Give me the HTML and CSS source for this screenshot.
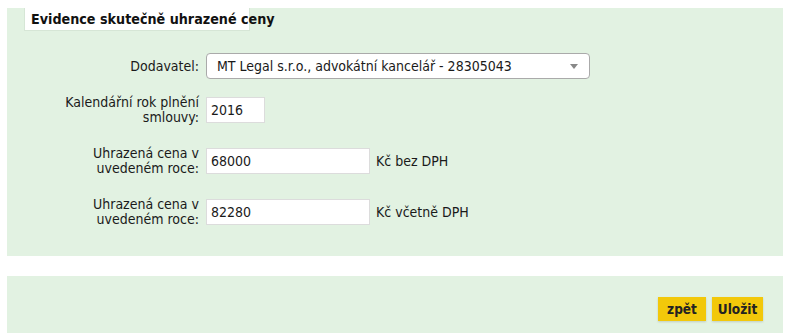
FILE: index.html
```html
<!DOCTYPE html>
<html lang="cs">
<head>
<meta charset="utf-8">
<title>Evidence skutečně uhrazené ceny</title>
<link rel="stylesheet" href="styles.css">
</head>
<body>
<div class="page">
  <section class="panel form-panel">
    <div class="legend">Evidence skutečně uhrazené ceny</div>
    <div class="rows">
      <div class="row row-first">
        <label class="lbl">Dodavatel:</label>
        <div class="select">
          <span class="select-text">MT Legal s.r.o., advokátní kancelář - 28305043</span>
          <svg class="arrow" width="8" height="5" viewBox="0 0 8 5"><path d="M0 0H8L4 5Z" fill="#888"/></svg>
        </div>
      </div>
      <div class="row row-year">
        <label class="lbl">Kalendářní rok plnění smlouvy:</label>
        <input class="field field-year" type="text" value="2016">
      </div>
      <div class="row row-price">
        <label class="lbl">Uhrazená cena v uvedeném roce:</label>
        <input class="field field-price" type="text" value="68000">
        <span class="suffix">Kč bez DPH</span>
      </div>
      <div class="row row-price">
        <label class="lbl">Uhrazená cena v uvedeném roce:</label>
        <input class="field field-price" type="text" value="82280">
        <span class="suffix">Kč včetně DPH</span>
      </div>
    </div>
  </section>
  <section class="panel actions">
    <button class="btn btn-back" type="button">zpět</button>
    <button class="btn btn-save" type="button">Uložit</button>
  </section>
</div>
</body>
</html>
```
FILE: styles.css
```css
html, body {
  margin: 0;
  padding: 0;
  background: #ffffff;
  overflow: hidden;
}
body {
  font-family: "DejaVu Sans Condensed", "DejaVu Sans", sans-serif;
  font-size: 14px;
  color: #1a1a1a;
}
.page {
  padding: 8px 4px 0 7px;
}
.panel {
  background: #e2f2e2;
}
.form-panel {
  height: 248px;
  box-sizing: border-box;
}
.legend {
  display: inline-block;
  box-sizing: border-box;
  margin-left: 17px;
  background: #fff;
  border: 1px solid #d6e6d6;
  border-top: none;
  padding: 4px 6px 3px 6px;
  font-weight: bold;
  font-size: 14.2px;
  line-height: 15px;
  color: #111;
  width: 226px;
  white-space: nowrap;
}
.rows {
  padding-left: 52px;
  padding-top: 22px;
}
.row {
  display: flex;
  align-items: center;
}
.row-year {
  margin-top: 15px;
  min-height: 32px;
}
.row-price {
  margin-top: 19px;
  min-height: 32px;
}
.lbl {
  width: 140px;
  flex: none;
  text-align: right;
  line-height: 15px;
  margin-right: 7px;
}
.select {
  width: 384px;
  height: 26px;
  box-sizing: border-box;
  background: #fff;
  border: 1px solid #aaa;
  border-radius: 4px;
  display: flex;
  align-items: center;
  padding: 0 10px;
}
.select-text {
  flex: 1;
  white-space: nowrap;
}
.arrow {
  margin-right: 1px;
}
.field {
  height: 26px;
  box-sizing: border-box;
  border: 1px solid #dcdcdc;
  background: #fff;
  padding: 0 4px;
  font: inherit;
  color: #1a1a1a;
  outline: none;
}
.field-year {
  width: 59px;
}
.field-price {
  width: 164px;
}
.suffix {
  margin-left: 6px;
}
.actions {
  margin-top: 20px;
  height: 57px;
  box-sizing: border-box;
  display: flex;
  justify-content: flex-end;
  align-items: flex-start;
  padding: 21px 20px 0 0;
  gap: 6px;
}
.btn {
  background: #f2c80a;
  border: none;
  height: 24px;
  padding: 0;
  font-family: "DejaVu Sans Condensed", "DejaVu Sans", sans-serif;
  font-size: 13.5px;
  font-weight: bold;
  color: #222;
  box-shadow: 0 1px 2px rgba(0,0,0,0.15);
  cursor: pointer;
}
.btn-back {
  width: 48px;
}
.btn-save {
  width: 51px;
}
```
